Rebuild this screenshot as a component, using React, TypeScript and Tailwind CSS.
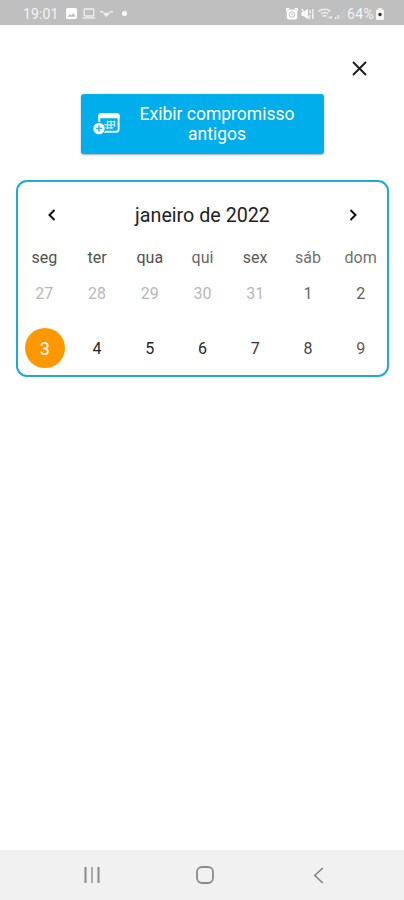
import { clsx } from 'clsx';

interface Day {
  day: number;
  tone: string;
  selected?: boolean;
}

const weekdays = [
  { label: 'seg', tone: 'text-[#505050]' },
  { label: 'ter', tone: 'text-[#505050]' },
  { label: 'qua', tone: 'text-[#505050]' },
  { label: 'qui', tone: 'text-[#666]' },
  { label: 'sex', tone: 'text-[#5a5a5a]' },
  { label: 'sáb', tone: 'text-[#707070]' },
  { label: 'dom', tone: 'text-[#707070]' },
];

const weeks: Day[][] = [
  [
    { day: 27, tone: 'text-[#b8b8b8]' },
    { day: 28, tone: 'text-[#b8b8b8]' },
    { day: 29, tone: 'text-[#b8b8b8]' },
    { day: 30, tone: 'text-[#b8b8b8]' },
    { day: 31, tone: 'text-[#b8b8b8]' },
    { day: 1, tone: 'text-[#666]' },
    { day: 2, tone: 'text-[#5c5c5c]' },
  ],
  [
    { day: 3, tone: 'text-white', selected: true },
    { day: 4, tone: 'text-[#262626]' },
    { day: 5, tone: 'text-[#262626]' },
    { day: 6, tone: 'text-[#262626]' },
    { day: 7, tone: 'text-[#333]' },
    { day: 8, tone: 'text-[#444]' },
    { day: 9, tone: 'text-[#5c5c5c]' },
  ],
];

const StatusBar = () => (
  <header className="flex h-[25px] shrink-0 items-center justify-between bg-[#bfbfbf] pr-[20px] pl-[23px] pt-[2px] text-[14px] leading-none text-[#f4f4f4]">
    <div className="flex items-center">
      <span className="w-[36px] tracking-[0.1px]">19:01</span>
      <svg className="ml-[7px]" width="11" height="11" viewBox="0 0 11 11">
        <rect width="11" height="11" rx="1.5" fill="#fff" />
        <path d="M1.5 8.8 3.8 6l1.5 1.5L7.3 5l2.2 3.8z" fill="#bfbfbf" />
      </svg>
      <svg className="ml-[5px]" width="14" height="11" viewBox="0 0 14 11" fill="none" stroke="#f0f0f0" strokeWidth="1.3">
        <rect x="2.2" y="1" width="9.6" height="7" rx="0.8" />
        <path d="M0.5 10h13" />
      </svg>
      <svg className="ml-[4px]" width="13" height="8" viewBox="0 0 13 8" fill="none" stroke="#f0f0f0" strokeWidth="1.5">
        <path d="M0 1.8h3.5M3.5 3.5h6M9.5 1.8H13M4 3.3 6.3 6l3.2-3" />
      </svg>
      <span className="ml-[9px] size-[5px] rounded-full bg-white" />
    </div>
    <div className="flex items-center">
      <svg width="12" height="12" viewBox="0 0 12 12" fill="none">
        <path d="M0.3 3V0.8h3M11.7 3V0.8h-3" stroke="#fff" strokeWidth="1.4" />
        <rect x="0.8" y="1.5" width="10.4" height="10" rx="2" fill="#fff" />
        <circle cx="6" cy="6.5" r="2.8" stroke="#bfbfbf" />
        <path d="M6 5v1.7l1.3.8" stroke="#bfbfbf" />
      </svg>
      <svg className="ml-[3px]" width="13" height="12" viewBox="0 0 13 12">
        <path d="M0.5 4h2.2L6.8 0.8v10.4L2.7 8H0.5z" fill="#fff" />
        <path d="m0.5 1 8.5 10M9 2v3.5M9 7v2M11.8 1v10" fill="none" stroke="#f5f5f5" strokeWidth="1.3" />
      </svg>
      <svg className="ml-[4px]" width="15" height="12" viewBox="0 0 15 12" fill="none" stroke="#eee" strokeWidth="1.6">
        <path d="M0.7 3.5Q6.5-1 12.3 3.5M2.8 6q3.7-3 7.4 0M4.8 8.3q1.7-1.4 3.4 0" />
        <path d="M9.5 9.5h2M13 8v3" />
      </svg>
      <svg className="ml-[2px]" width="10" height="11" viewBox="0 0 10 11">
        <path d="M0 9h1.3v2H0zM2.5 7h1.3v4H2.5z" fill="#eee" />
        <path d="M5.5 4h1.2v7H5.5zM8.3 1h1.2v10H8.3z" fill="#cbcbcb" />
      </svg>
      <span className="ml-[2px] w-[29px] text-[14px] tracking-[0.4px]">64%</span>
      <svg width="8" height="12" viewBox="0 0 8 12">
        <path d="M2.3 0h3.4v1.5H7A1 1 0 0 1 8 2.5V11a1 1 0 0 1-1 1H1a1 1 0 0 1-1-1V2.5a1 1 0 0 1 1-1h1.3z" fill="#f5f5f5" />
        <circle cx="4" cy="6.5" r="1.7" fill="#333" />
      </svg>
    </div>
  </header>
);

const CalendarAddIcon = () => (
  <svg width="28" height="22" viewBox="0 0 28 22" fill="none">
    <rect x="6.2" y="1.2" width="19.4" height="17.6" rx="2.5" stroke="#e9f8ff" strokeWidth="2" />
    <path d="M5.2 5.3V3A2.6 2.6 0 0 1 8 .2h16A2.6 2.6 0 0 1 26.6 3v2.3z" fill="#fff" />
    <path d="M14 8.7h8.5M11 11.8h11.5M12 14.9h8.5M14.5 7.7v8.5M18 7.7v8.5M21.5 7.7v6" stroke="#c5edff" strokeWidth="1.3" />
    <circle cx="6" cy="15.6" r="6.6" fill="#00aeec" />
    <circle cx="6" cy="15.6" r="5.7" fill="#fff" />
    <path d="M6 12.4v6.4M2.8 15.6h6.4" stroke="#35b8ea" strokeWidth="1.5" />
  </svg>
);

const Calendar = () => (
  <section className="mr-[15px] ml-4 mt-[26px] h-[197px] rounded-[11px] border-2 border-[#20a9d3]">
    <div className="flex h-[66px] items-center justify-between px-[29px]">
      <svg width="10" height="14" viewBox="0 0 10 14" fill="none" stroke="#111" strokeWidth="2">
        <path d="M7.5 2 2.5 7l5 5" />
      </svg>
      <h1 className="pt-px text-[19.7px] leading-6 text-[#222]">janeiro de 2022</h1>
      <svg width="10" height="14" viewBox="0 0 10 14" fill="none" stroke="#111" strokeWidth="2">
        <path d="m2.5 2 5 5-5 5" />
      </svg>
    </div>
    <div className="grid h-[18px] grid-cols-7 text-center text-[16px] leading-5">
      {weekdays.map(({ label, tone }) => (
        <span key={label} className={tone}>{label}</span>
      ))}
    </div>
    {weeks.map((week) => (
      <div key={week[0].day} className="grid h-[55px] grid-cols-7 place-items-center text-[16px]">
        {week.map(({ day, tone, selected }) => (
          <span
            key={day}
            className={clsx('flex size-10 items-center justify-center rounded-full', tone, selected && 'mb-px ml-px bg-[#ff9800] text-[18px]')}
          >
            {day}
          </span>
        ))}
      </div>
    ))}
  </section>
);

const NavigationBar = () => (
  <nav className="mt-auto grid h-[50px] shrink-0 grid-cols-[1fr_18px_1fr] items-center bg-[#f1f1f1] pr-[80px] pl-[84px]">
    <svg width="16" height="16" viewBox="0 0 16 16" fill="none" strokeWidth="2">
      <path d="M1.5 0v16M14.5 0v16" stroke="#888" />
      <path d="M8 0v16" stroke="#aaa" />
    </svg>
    <svg className="ml-[0.5px]" width="18" height="18" viewBox="0 0 18 18" fill="none" stroke="#8b8b8b" strokeWidth="1.8">
      <rect x="1" y="1" width="16" height="16" rx="5" />
    </svg>
    <svg className="justify-self-end" width="11" height="17" viewBox="0 0 11 17" fill="none" stroke="#858585" strokeWidth="1.7">
      <path d="m9.8 1-8 7.5 8 7.5" />
    </svg>
  </nav>
);

export default function App() {
  return (
    <div className="flex h-screen flex-col bg-white font-[Roboto,sans-serif]">
      <StatusBar />
      <div className="flex h-[69px] justify-end pt-[36px] pr-[37px]">
        <button type="button" aria-label="Fechar" className="size-[15px]">
          <svg width="15" height="15" viewBox="0 0 15 15" fill="none" stroke="#1c1c1c" strokeWidth="1.9">
            <path d="m1 1 13 13M14 1 1 14" />
          </svg>
        </button>
      </div>
      <button
        type="button"
        className="ml-[81px] flex h-[60px] w-[243px] shrink-0 items-center rounded-[3px] bg-[#00aeec] pl-[12px] text-white shadow-[0_1px_2px_rgba(0,0,0,0.35)]"
      >
        <CalendarAddIcon />
        <span className="ml-[6px] w-[180px] pb-px text-center text-[17.5px] leading-5">
          Exibir compromisso antigos
        </span>
      </button>
      <Calendar />
      <NavigationBar />
    </div>
  );
}
